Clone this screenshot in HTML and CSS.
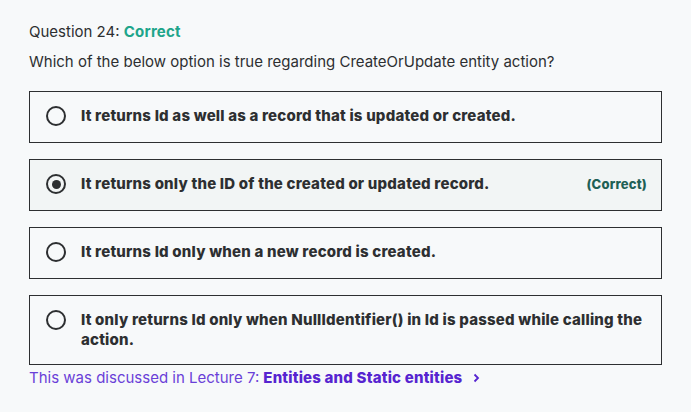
FILE: index.html
```html
<!DOCTYPE html>
<html>
<head>
<meta charset="utf-8">
<link rel="stylesheet" href="styles.css">
</head>
<body>
<div class="page">
  <div class="qtitle">Question 24: <span class="ok">Correct</span></div>
  <div class="qtext">Which of the below option is true regarding CreateOrUpdate entity action?</div>
  <div class="opts">
    <div class="opt"><span class="radio"></span><span class="label">It returns Id as well as a record that is updated or created.</span></div>
    <div class="opt sel"><span class="radio on"></span><span class="label">It returns only the ID of the created or updated record.</span><span class="tag">(Correct)</span></div>
    <div class="opt"><span class="radio"></span><span class="label">It returns Id only when a new record is created.</span></div>
    <div class="opt"><span class="radio"></span><span class="label">It only returns Id only when NullIdentifier() in Id is passed while calling the action.</span></div>
  </div>
  <div class="ref">This was discussed in Lecture 7: <b>Entities and Static entities</b><svg class="chev" width="12" height="12" viewBox="0 0 12 12"><path d="M4.5 2.5 L8 6 L4.5 9.5" fill="none" stroke="#5624d0" stroke-width="1.8"/></svg></div>
</div>
</body>
</html>
```
FILE: styles.css
```css
html, body { margin: 0; padding: 0; background: #f7f9fa; }
body { font-family: "Inter", "Noto Sans", sans-serif; color: #2d2f31; }
.page { padding: 22px 29px 0 29px; width: 633px; }
.qtitle { font-size: 15px; line-height: 20px; }
.ok { color: #1ea58a; font-weight: 700; letter-spacing: 0.2px; }
.qtext { font-size: 15px; line-height: 20px; margin-top: 10px; }
.opts { display: flex; flex-direction: column; gap: 16px; margin-top: 19px; }
.opt { display: flex; align-items: flex-start; border: 1px solid #2d2f31; padding: 14px 12px 14px 16px; min-height: 22px; }
.opt.sel { background: #f2f5f5; }
.radio { flex: none; box-sizing: border-box; width: 20px; height: 20px; border: 2px solid #2d2f31; border-radius: 50%; margin: 0 15px 0 0; display: flex; align-items: center; justify-content: center; }
.radio.on::after { content: ""; width: 9px; height: 9px; border-radius: 50%; background: #2d2f31; }
.label { flex: 1; font-weight: 800; font-size: 15px; line-height: 20px; letter-spacing: 0.2px; }
.tag { font-weight: 800; font-size: 13px; line-height: 20px; color: #1e6055; margin-left: 16px; margin-right: 2px; letter-spacing: 0.2px; }
.ref { font-size: 15px; line-height: 20px; color: #6a3fd8; margin-top: 3px; display: flex; align-items: center; }
.ref b { color: #5624d0; font-weight: 800; margin-left: 4px; letter-spacing: 0.2px; }
.chev { margin-left: 8px; }
```
